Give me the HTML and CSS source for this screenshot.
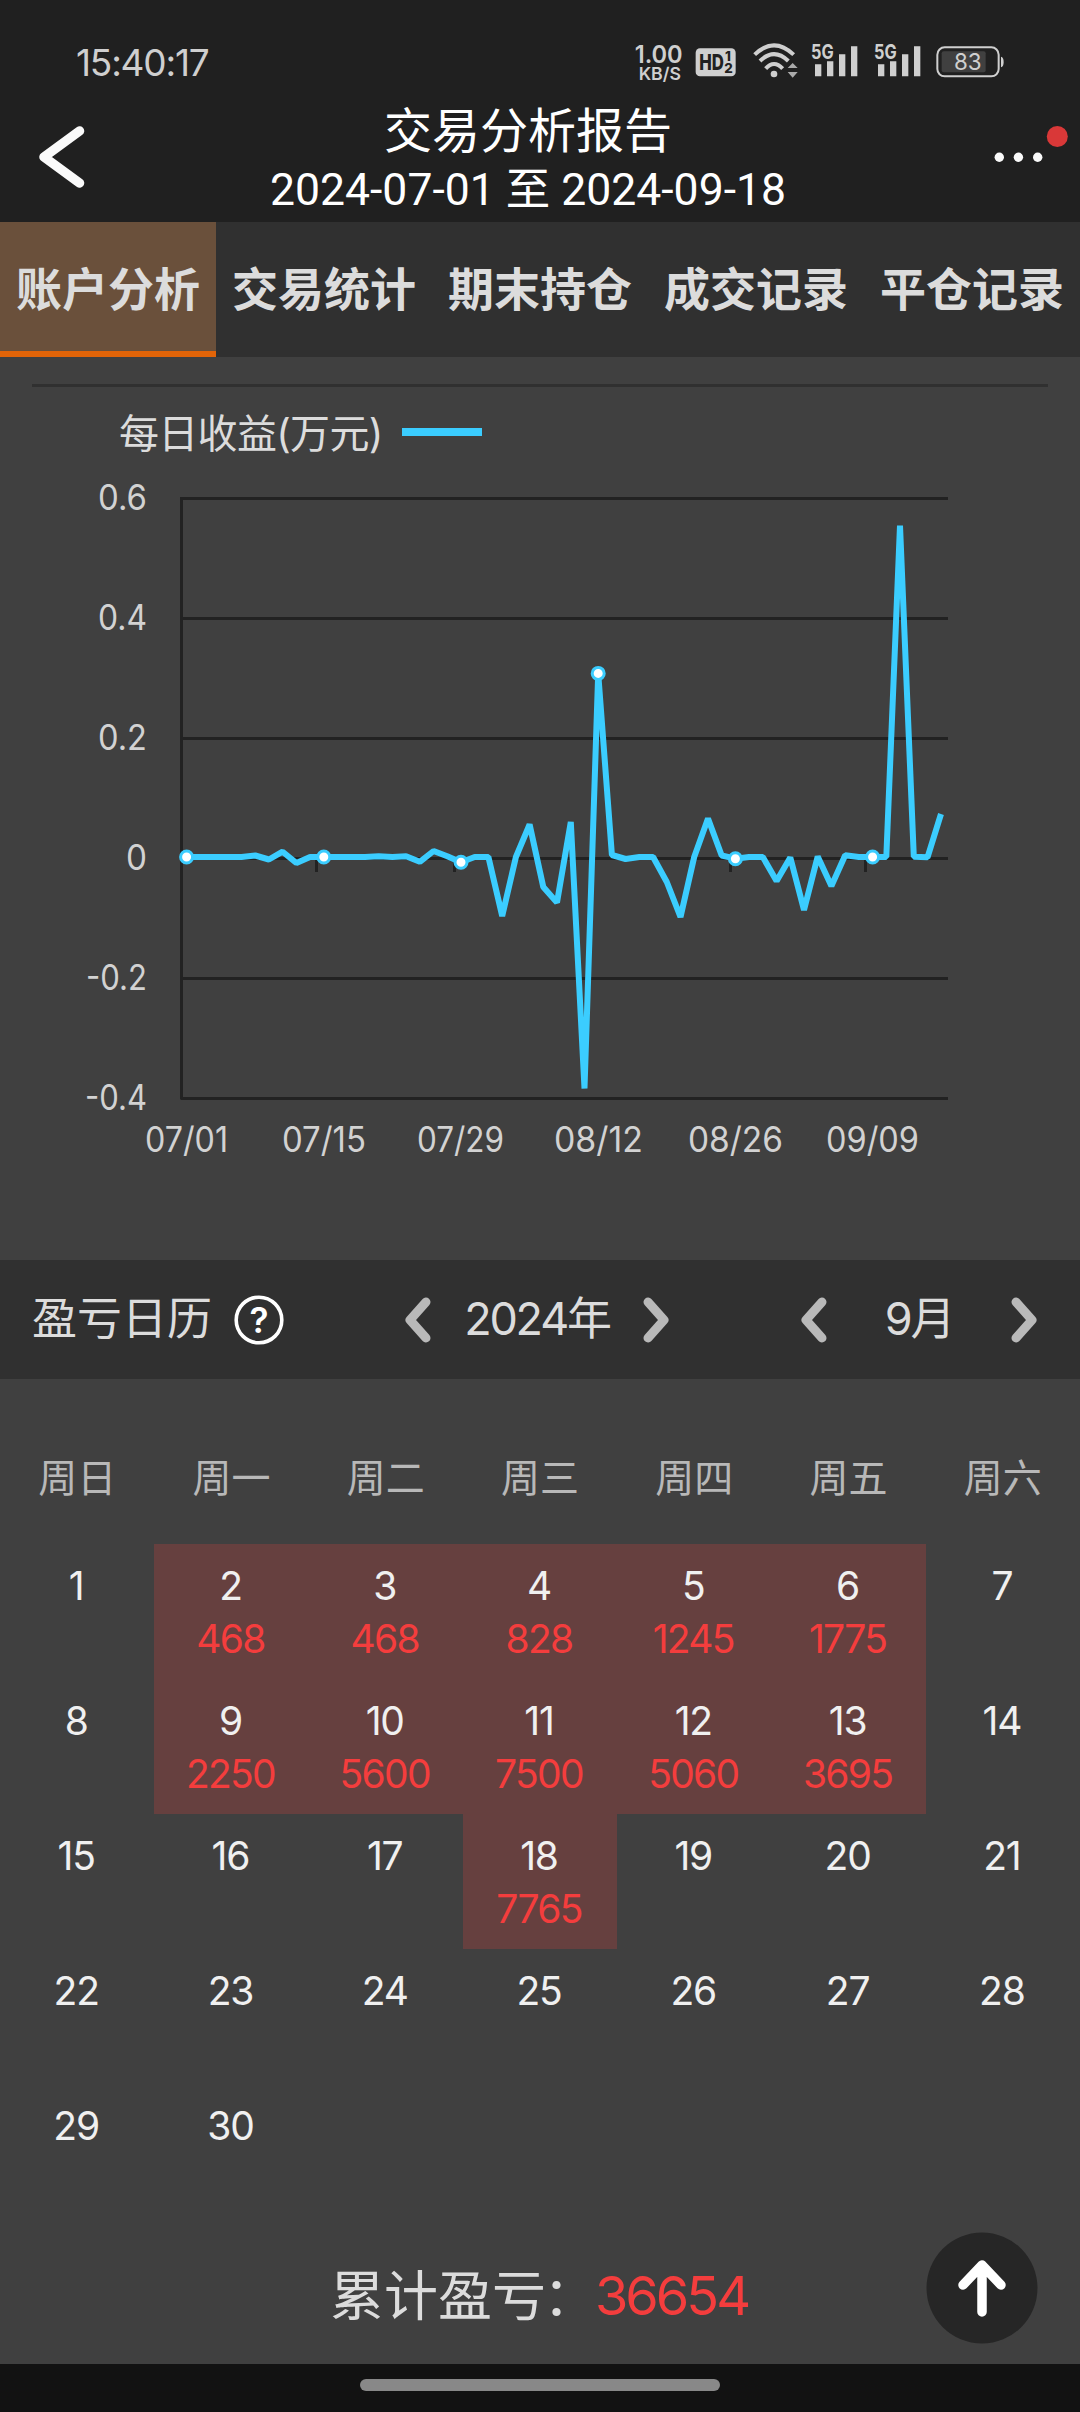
FILE: index.html
```html
<!DOCTYPE html>
<html lang="zh-CN">
<head>
<meta charset="utf-8">
<title>交易分析报告</title>
<link rel="stylesheet" href="styles.css">
</head>
<body>
<div class="app">
  <header class="top">
    <div class="status">
      <span class="clock">15:40:17</span>
      <svg class="status-icons" width="373" height="50" viewBox="100 113 1119 150">
        <g fill="#cfcfcf">
          <text x="105" y="190" font-size="72" font-weight="600" textLength="144" lengthAdjust="spacingAndGlyphs">1.00</text>
          <text x="117" y="242" font-size="53" font-weight="600" textLength="127" lengthAdjust="spacingAndGlyphs">KB/S</text>
          <rect x="288" y="147" width="120" height="84" rx="13"/>
          <text class="hd" x="299" y="213" font-size="66" font-weight="800" textLength="74" lengthAdjust="spacingAndGlyphs">HD</text>
          <text class="hd" x="376" y="185" font-size="40" font-weight="800">1</text>
          <text class="hd" x="374" y="220" font-size="40" font-weight="800">2</text>
          <circle cx="523" cy="224" r="10"/>
          <path d="M564 206l15-15 15 15zM564 218h30l-15 17z" fill="#aaa"/>
          <text x="634" y="180" font-size="60" font-weight="700" textLength="68" lengthAdjust="spacingAndGlyphs">5G</text>
          <path d="M646 195h19v36h-19zM682 186h19v45h-19zM718 165h19v66h-19zM754 141h19v90h-19z"/>
          <text x="823" y="180" font-size="60" font-weight="700" textLength="68" lengthAdjust="spacingAndGlyphs">5G</text>
          <path d="M835 195h19v36h-19zM871 186h19v45h-19zM907 165h19v66h-19zM943 141h19v90h-19z"/>
          <path d="M1204 172q8 2 8 16t-8 16z"/>
        </g>
        <g fill="none" stroke="#cfcfcf" stroke-width="12">
          <path d="M465 166Q523 110 582 166"/>
          <path d="M481 185Q523 144 566 185"/>
          <path d="M498 208Q523 180 549 208"/>
          <rect x="1013" y="144" width="184" height="87" rx="22" stroke-width="6"/>
        </g>
        <rect x="1026" y="156" width="132" height="63" rx="6" fill="#404040"/>
        <text x="1063" y="213" font-size="70" fill="#cfcfcf" textLength="83" lengthAdjust="spacingAndGlyphs">83</text>
      </svg>
    </div>
    <div class="bar">
      <svg class="back" width="50" height="64" viewBox="0 0 50 64"><path d="M43.5 6L8 32L43.5 58"/></svg>
      <div class="heading">
        <h1>交易分析报告</h1>
        <p>2024-07-01 至 2024-09-18</p>
      </div>
      <svg class="more" width="80" height="40" viewBox="0 0 80 40">
        <g fill="#fafafa"><circle cx="9.3" cy="31.3" r="4.7"/><circle cx="28.4" cy="31.3" r="4.7"/><circle cx="47.7" cy="31.3" r="4.7"/></g>
        <circle cx="67.3" cy="10.5" r="10.5" fill="#d93838"/>
      </svg>
    </div>
  </header>

  <nav class="tabs">
    <a class="tab active">账户分析</a>
    <a class="tab">交易统计</a>
    <a class="tab">期末持仓</a>
    <a class="tab">成交记录</a>
    <a class="tab">平仓记录</a>
  </nav>

  <section class="chart">
    <div class="legend"><span>每日收益(万元)</span><i class="swatch"></i></div>
    <svg class="plot" width="1080" height="700" viewBox="0 470 1080 700">
      <g class="grid">
        <path d="M181 498.5H948M181 618.5H948M181 738.5H948M181 858.5H948M181 978.5H948M181 1098.5H948M181.5 497V1099.5"/>
        <path d="M316.5 858V872M454.5 858V872M592.5 858V872M730.5 858V872M865.5 858V872"/>
      </g>
      <g class="ylabels">
        <text x="98" y="510" textLength="49" lengthAdjust="spacingAndGlyphs">0.6</text>
        <text x="98" y="630" textLength="49" lengthAdjust="spacingAndGlyphs">0.4</text>
        <text x="98" y="750" textLength="49" lengthAdjust="spacingAndGlyphs">0.2</text>
        <text x="126" y="870" textLength="21" lengthAdjust="spacingAndGlyphs">0</text>
        <text x="86" y="990" textLength="61" lengthAdjust="spacingAndGlyphs">-0.2</text>
        <text x="85" y="1110" textLength="62" lengthAdjust="spacingAndGlyphs">-0.4</text>
      </g>
      <g class="xlabels">
        <text x="145" y="1152" textLength="83" lengthAdjust="spacingAndGlyphs">07/01</text>
        <text x="282" y="1152" textLength="84" lengthAdjust="spacingAndGlyphs">07/15</text>
        <text x="417" y="1152" textLength="87" lengthAdjust="spacingAndGlyphs">07/29</text>
        <text x="554" y="1152" textLength="89" lengthAdjust="spacingAndGlyphs">08/12</text>
        <text x="688" y="1152" textLength="95" lengthAdjust="spacingAndGlyphs">08/26</text>
        <text x="826" y="1152" textLength="93" lengthAdjust="spacingAndGlyphs">09/09</text>
      </g>
      <polyline class="series" points="186.6,857 200.3,857 214,857 227.8,857 241.5,857 255.2,855.5 268.9,859.5 282.6,851.7 296.4,863 310.1,857 323.8,857 337.5,857 351.2,857 365,857 378.7,856.3 392.4,857 406.1,856.2 419.8,861.8 433.6,851 447.3,856.3 461,862.3 474.7,857 488.4,857 502.2,916 515.9,857 529.6,824.5 543.3,887 557,902.5 570.8,822 584.5,1088.5 598.2,673.4 611.9,855 625.6,859 639.4,857 653.1,857 666.8,882 680.5,917 694.2,857 708,818.5 721.7,855.5 735.4,858.7 749.1,857 762.8,857 776.6,881 790.3,857.5 804,910 817.7,856.5 831.4,886 845.2,855.3 858.9,857 872.6,857 886.3,857 900,525.5 913.8,856.7 927.5,857.3 941,814"/>
      <g class="markers">
        <circle cx="186.6" cy="857" r="6"/><circle cx="323.8" cy="857" r="6"/><circle cx="461" cy="862.3" r="6"/>
        <circle cx="598.2" cy="673.4" r="6"/><circle cx="735.4" cy="858.7" r="6"/><circle cx="872.6" cy="857" r="6"/>
      </g>
    </svg>
  </section>

  <section class="cal-head">
    <span class="cal-title">盈亏日历</span>
    <svg class="help" width="50" height="50" viewBox="0 0 50 50"><circle cx="25" cy="25" r="22.8"/><text x="25" y="38" text-anchor="middle">?</text></svg>
    <div class="picker year">
      <svg class="chev" width="28" height="46" viewBox="0 0 28 46"><path d="M22 5L6 23L22 41"/></svg>
      <span>2024年</span>
      <svg class="chev" width="28" height="46" viewBox="0 0 28 46"><path d="M6 5L22 23L6 41"/></svg>
    </div>
    <div class="picker month">
      <svg class="chev" width="28" height="46" viewBox="0 0 28 46"><path d="M22 5L6 23L22 41"/></svg>
      <span>9月</span>
      <svg class="chev" width="28" height="46" viewBox="0 0 28 46"><path d="M6 5L22 23L6 41"/></svg>
    </div>
  </section>

  <section class="calendar">
    <div class="week"><span>周日</span><span>周一</span><span>周二</span><span>周三</span><span>周四</span><span>周五</span><span>周六</span></div>
    <div class="days">
      <div class="day">1</div><div class="day gain">2<b>468</b></div><div class="day gain">3<b>468</b></div><div class="day gain">4<b>828</b></div><div class="day gain">5<b>1245</b></div><div class="day gain">6<b>1775</b></div><div class="day">7</div>
      <div class="day">8</div><div class="day gain">9<b>2250</b></div><div class="day gain">10<b>5600</b></div><div class="day gain">11<b>7500</b></div><div class="day gain">12<b>5060</b></div><div class="day gain">13<b>3695</b></div><div class="day">14</div>
      <div class="day">15</div><div class="day">16</div><div class="day">17</div><div class="day gain">18<b>7765</b></div><div class="day">19</div><div class="day">20</div><div class="day">21</div>
      <div class="day">22</div><div class="day">23</div><div class="day">24</div><div class="day">25</div><div class="day">26</div><div class="day">27</div><div class="day">28</div>
      <div class="day">29</div><div class="day">30</div>
    </div>
  </section>

  <section class="total">
    <span class="total-label">累计盈亏<span class="colon">：</span></span><span class="total-value">36654</span>
    <svg class="to-top" width="112" height="112" viewBox="0 0 112 112"><circle cx="56" cy="56" r="55.5"/><path d="M56 80V34M37 53L56 33L75 53"/></svg>
  </section>

  <footer class="home"><i></i></footer>
</div>
</body>
</html>
```
FILE: styles.css
```css
* { box-sizing: border-box; }
body {
  margin: 0;
  background: #404040;
  color: #dcdcdc;
  font-family: Inter, "Noto Sans CJK SC", sans-serif;
}
svg { display: block; flex: none; }
.app {
  width: 1080px;
  height: 2412px;
  display: flex;
  flex-direction: column;
  overflow: hidden;
}

/* status bar and title */
.top { height: 222px; background: #202020; flex: none; }
.status {
  height: 102px;
  padding: 37px 74px 0 76px;
  display: flex;
  justify-content: space-between;
}
.clock { font-size: 37px; line-height: 52px; color: #cfcfcf; letter-spacing: -1.2px; }
.hd { fill: #202020; }
.bar { height: 120px; display: grid; grid-template-columns: 200px 1fr 224px; }
.back { margin: 23px 0 0 36px; }
.back path { fill: none; stroke: #fafafa; stroke-width: 9.5; stroke-linecap: round; stroke-linejoin: round; }
.heading { text-align: center; color: #fff; padding-top: 1px; }
.heading h1 {
  margin: 0;
  height: 56px;
  font-size: 48px;
  line-height: 56px;
  font-weight: 400;
  white-space: nowrap;
}
.heading p {
  margin: 3px 0 0;
  font-family: Roboto, "Noto Sans CJK SC", sans-serif;
  font-size: 44.5px;
  line-height: 56px;
  white-space: nowrap;
}
.more { margin: 24px 0 0 134px; justify-self: start; }

/* tabs */
.tabs { height: 135px; flex: none; background: #303030; display: grid; grid-template-columns: repeat(5, 1fr); }
.tab {
  height: 135px;
  padding-top: 4px;
  border-bottom: 6px solid transparent;
  text-align: center;
  font-size: 46px;
  line-height: 126px;
  font-weight: 700;
}
.tab.active { background: #6a503b; background-clip: padding-box; border-bottom-color: #e26408; }

/* line chart */
.chart { height: 903px; flex: none; padding-top: 27px; }
.legend {
  margin: 0 32px;
  border-top: 3px solid #303030;
  height: 86px;
  padding: 5px 0 0 87px;
  display: flex;
  align-items: center;
  gap: 19px;
  font-size: 40px;
  letter-spacing: -0.7px;
}
.swatch { width: 80px; height: 8px; margin-top: 2px; background: #3bcdff; }
.grid path { fill: none; stroke: #222; stroke-width: 3; }
.ylabels, .xlabels { fill: #d2d2d2; font-size: 35px; }
.series { fill: none; stroke: #3bcdff; stroke-width: 6; stroke-linejoin: bevel; }
.markers circle { fill: #fff; stroke: #3bcdff; stroke-width: 3; }

/* profit calendar */
.cal-head {
  height: 119px;
  flex: none;
  background: #303030;
  display: grid;
  grid-template-columns: 201px 171px 328px auto;
  align-items: center;
  padding-left: 32px;
  font-size: 45px;
  line-height: 60px;
}
.cal-head span { white-space: nowrap; padding-bottom: 1px; }
.cal-head .help { margin-left: 1px; }
.help circle { fill: none; stroke: #fff; stroke-width: 3.6; }
.help text { fill: #fff; font-size: 35px; font-weight: 600; }
.picker { display: flex; align-items: center; justify-content: space-between; letter-spacing: -2.2px; }
.year { width: 266px; }
.month { width: 238px; margin-left: 68px; }
.chev path { fill: none; stroke: #b9b9b9; stroke-width: 9; stroke-linecap: round; stroke-linejoin: round; }
.week {
  height: 165px;
  padding-top: 71px;
  display: grid;
  grid-template-columns: repeat(7, 1fr);
  text-align: center;
  font-size: 39px;
  line-height: 56px;
  color: #b8b8b8;
}
.days { display: grid; grid-template-columns: repeat(7, 1fr); grid-auto-rows: 135px; }
.day {
  padding: 15px 2px 0 0;
  text-align: center;
  font-size: 39px;
  line-height: 53px;
  letter-spacing: -1.2px;
  color: #f0f0f0;
}
.day b { display: block; font-weight: 400; letter-spacing: -1.7px; color: #f43d3d; }
.day.gain { background: #66403f; }

/* running total */
.total {
  flex: 1;
  display: flex;
  padding-left: 330px;
  font-size: 54px;
  line-height: 80px;
  padding-top: 38px;
  position: relative;
  white-space: nowrap;
}
.colon { margin: 0 -2px 0 -3px; }
.total-value { color: #f43d3d; letter-spacing: -3px; margin-top: -1px; }
.to-top { position: absolute; right: 42px; bottom: 20px; }
.to-top circle { fill: #262626; }
.to-top path { fill: none; stroke: #fff; stroke-width: 9.5; stroke-linecap: round; stroke-linejoin: round; }
.home { height: 48px; flex: none; background: #121212; display: flex; justify-content: center; padding-top: 15px; }
.home i { width: 360px; height: 12px; border-radius: 6px; background: #888; }
```
